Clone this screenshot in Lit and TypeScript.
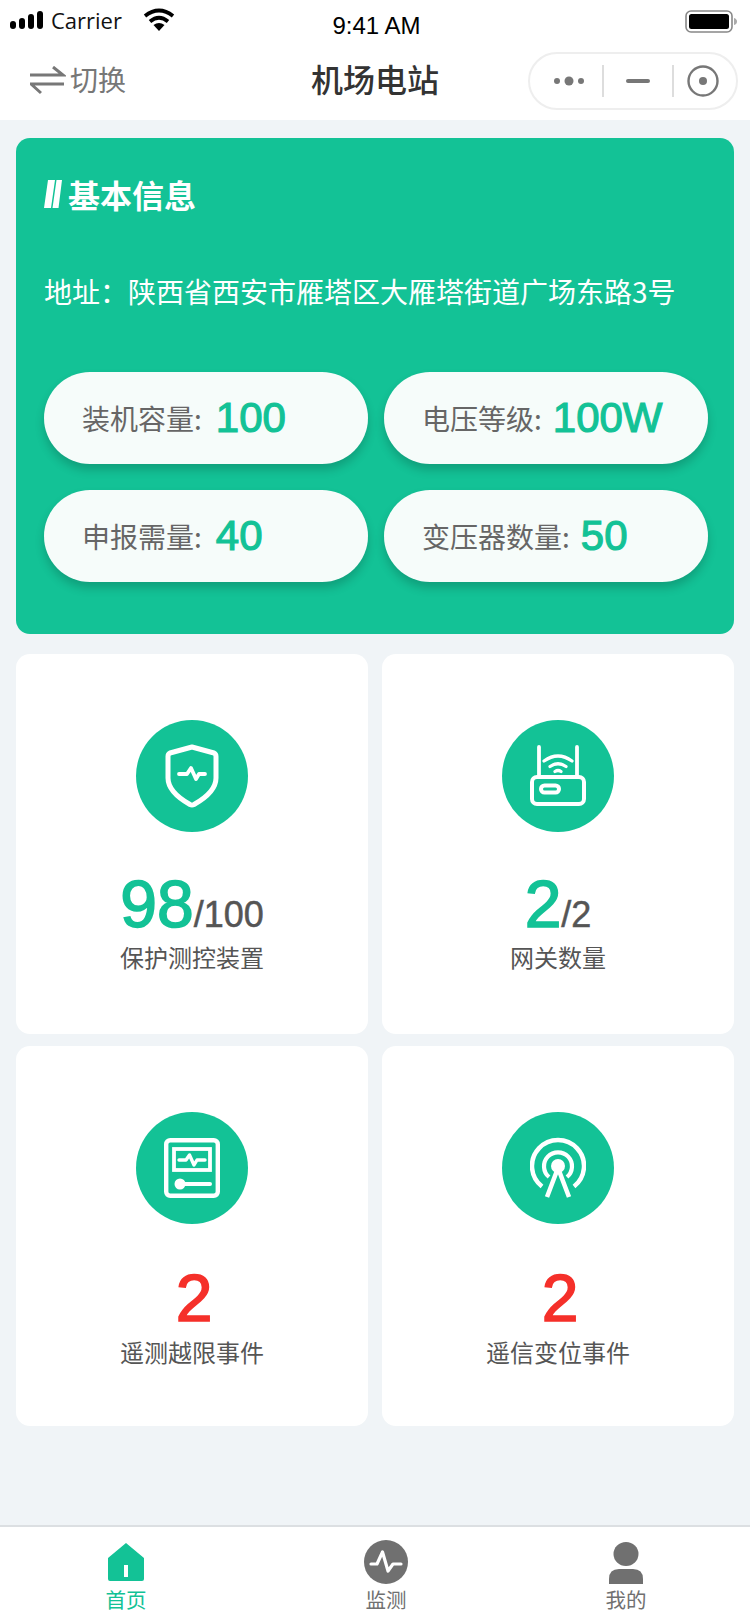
import { LitElement, html, css, svg } from "lit";
import { customElement } from "lit/decorators.js";

const pills = [
  { label: "装机容量:", value: "100" },
  { label: "电压等级:", value: "100W" },
  { label: "申报需量:", value: "40" },
  { label: "变压器数量:", value: "50" },
];

const shieldIcon = svg`
  <path d="M28 3 L50 9 Q52 10 52 12.500 V34 C52 47 38 56 30 60.500 Q28 61.500 26 60.500 C18 56 4 47 4 34 V12.500 Q4 10 6 9 Z" fill="none" stroke="#fff" stroke-width="5" stroke-linejoin="round"/>
  <path d="M15 30 H23 L27 24 L32 35 L35 30 H41" fill="none" stroke="#fff" stroke-width="3.800" stroke-linecap="round" stroke-linejoin="round"/>`;

const routerIcon = svg`
  <path d="M9 3 V33 M47 3 V33" stroke="#fff" stroke-width="3.800" stroke-linecap="round"/>
  <rect x="2" y="33" width="52" height="27" rx="5" fill="none" stroke="#fff" stroke-width="4"/>
  <rect x="11" y="41.500" width="18" height="7" rx="3.500" fill="none" stroke="#fff" stroke-width="4"/>
  <path d="M14 17 Q28 7 42 17 M20 22.500 Q28 17 36 22.500 M25 27.500 Q28 25.500 31 27.500" fill="none" stroke="#fff" stroke-width="3.200" stroke-linecap="round"/>`;

const reportIcon = svg`
  <rect x="2.200" y="4.200" width="51.600" height="55.600" rx="4" fill="none" stroke="#fff" stroke-width="4.400"/>
  <rect x="10" y="13" width="36" height="21" fill="none" stroke="#fff" stroke-width="3.800"/>
  <path d="M15 24 H22 L25.500 19 L30 29 L33 24 H41" fill="none" stroke="#fff" stroke-width="3.400" stroke-linecap="round" stroke-linejoin="round"/>
  <circle cx="16" cy="48" r="5.500" fill="#fff"/>
  <path d="M18 48 H46" stroke="#fff" stroke-width="4" stroke-linecap="round"/>`;

const towerIcon = svg`
  <path d="M12 50.500 A26 26 0 1 1 44 50.500" fill="none" stroke="#fff" stroke-width="4.500"/>
  <path d="M19 41 A14 14 0 1 1 37 41" fill="none" stroke="#fff" stroke-width="4.200"/>
  <circle cx="28" cy="30" r="7" fill="#fff"/>
  <path d="M28 32 L17 61 M28 32 L39 61" stroke="#fff" stroke-width="4.500"/>`;

const cards = [
  { icon: shieldIcon, big: "98", small: "/100", label: "保护测控装置", alert: false },
  { icon: routerIcon, big: "2", small: "/2", label: "网关数量", alert: false },
  { icon: reportIcon, big: "2", small: "", label: "遥测越限事件", alert: true },
  { icon: towerIcon, big: "2", small: "", label: "遥信变位事件", alert: true },
];

@customElement("app-root")
export class AppRoot extends LitElement {
  render() {
    return html`
      <div class="page">
        <div class="status">
          <div class="status-left">
            <svg class="signal" width="34" height="20" viewBox="0 0 34 20">
              <rect x="0" y="11" width="6" height="8" rx="3" fill="#000"/>
              <rect x="9" y="8" width="6" height="11" rx="3" fill="#000"/>
              <rect x="18" y="4" width="6" height="15" rx="3" fill="#000"/>
              <rect x="27" y="1" width="6" height="18" rx="3" fill="#000"/>
            </svg>
            <span class="carrier">Carrier</span>
            <svg width="32" height="24" viewBox="0 0 32 24">
              <path d="M2 8 Q16 -3 30 8 M7 13.500 Q16 6 25 13.500" fill="none" stroke="#000" stroke-width="3.800"/>
              <path d="M10.500 17 Q16 13 21.500 17 L16 23 Z" fill="#000"/>
            </svg>
          </div>
          <div class="time">9:41 AM</div>
          <div class="status-right">
            <svg width="52" height="24" viewBox="0 0 52 24">
              <rect x="1" y="1" width="46" height="21" rx="5" fill="none" stroke="#888" stroke-width="1.600"/>
              <rect x="4" y="4" width="40" height="15" rx="2.500" fill="#000"/>
              <path d="M49 8 Q52 9 52 11.500 Q52 14 49 15 Z" fill="#aaa"/>
            </svg>
          </div>
        </div>
        <div class="nav">
          <div class="switch">
            <svg width="36" height="30" viewBox="0 0 36 30">
              <path d="M0 9 H33 L23 1 M34 18 H1 L11 27" fill="none" stroke="#777" stroke-width="3"/>
            </svg>
            <span>切换</span>
          </div>
          <div class="title">机场电站</div>
          <div class="capsule">
            <svg class="cap-dots" width="30" height="12" viewBox="0 0 30 12">
              <circle cx="3" cy="6" r="3" fill="#777"/><circle cx="15" cy="6" r="4.500" fill="#777"/><circle cx="27" cy="6" r="3" fill="#777"/>
            </svg>
            <div class="cap-line"></div>
            <div class="cap-dash"></div>
            <div class="cap-line"></div>
            <svg class="cap-target" width="32" height="32" viewBox="0 0 32 32">
              <circle cx="16" cy="16" r="14.500" fill="none" stroke="#777" stroke-width="2.400"/><circle cx="16" cy="16" r="4" fill="#777"/>
            </svg>
          </div>
        </div>

        <main class="content">
          <section class="info">
            <div class="info-head">
              <svg width="18" height="28" viewBox="0 0 18 28">
                <path d="M4 0 H11 L7 28 H0 Z M12.500 0 H18 L14.500 28 H8.500 Z" fill="#fff"/>
              </svg>
              <h2>基本信息</h2>
            </div>
            <div class="address">地址：陕西省西安市雁塔区大雁塔街道广场东路3号</div>
            <div class="pills">
              ${pills.map(
                (p) => html`<div class="pill"><span class="pill-label">${p.label}</span><span class="pill-value">${p.value}</span></div>`
              )}
            </div>
          </section>

          <section class="grid">
            ${cards.map(
              (c) => html`
                <div class="card">
                  <div class="badge">
                    <svg width="56" height="64" viewBox="0 0 56 64">${c.icon}</svg>
                  </div>
                  <div class="count ${c.alert ? "plain" : ""}">
                    <span class="big ${c.alert ? "alert" : ""}">${c.big}</span><span class="small">${c.small}</span>
                  </div>
                  <div class="label">${c.label}</div>
                </div>
              `
            )}
          </section>
        </main>

        <footer class="tabs">
          <div class="tab active">
            <svg width="38" height="38" viewBox="0 0 38 38">
              <path d="M19 0 L37 15 V36 Q37 38 35 38 H3 Q1 38 1 36 V15 Z M17 22 V34 H21 V22 Z" fill="#13c296" fill-rule="evenodd"/>
            </svg>
            <span>首页</span>
          </div>
          <div class="tab">
            <svg width="44" height="44" viewBox="0 0 44 44">
              <circle cx="22" cy="22" r="22" fill="#707070"/>
              <path d="M7 24 H13 L18.500 12 L24 31 L29 24 H37" fill="none" stroke="#fff" stroke-width="3.200" stroke-linecap="round" stroke-linejoin="round"/>
            </svg>
            <span>监测</span>
          </div>
          <div class="tab">
            <svg width="36" height="44" viewBox="0 0 36 44">
              <ellipse cx="18" cy="14" rx="12.500" ry="12" fill="#707070"/>
              <path d="M1 44 V39 Q1 29 11 29 H25 Q35 29 35 39 V44 Z" fill="#707070"/>
            </svg>
            <span>我的</span>
          </div>
        </footer>
      </div>
    `;
  }

  static styles = css`
    :host {
      display: block;
      font-family: "Noto Sans CJK SC", "Noto Sans", sans-serif;
    }

    .page {
      width: 750px;
      height: 1624px;
      display: flex;
      flex-direction: column;
      background: #f0f4f7;
    }

    .status {
      height: 44px;
      flex: none;
      background: #fff;
      display: grid;
      grid-template-columns: 1fr auto 1fr;
      align-items: center;
      padding: 0 13px 0 10px;
    }

    .status-left {
      display: flex;
      align-items: center;
      gap: 7px;
      margin-top: -4px;
    }

    .carrier {
      font: 22px "Open Sans", sans-serif;
      color: #111;
      margin-right: 14px;
    }

    .time {
      font: 24px "Liberation Sans", sans-serif;
      color: #000;
      margin: 8px 0 0 6px;
    }

    .status-right {
      display: flex;
      justify-content: flex-end;
    }

    .nav {
      height: 76px;
      flex: none;
      background: #fff;
      display: flex;
      align-items: center;
      justify-content: space-between;
      padding: 0 12px 2px 30px;
      box-sizing: border-box;
      position: relative;
    }

    .switch {
      display: flex;
      align-items: center;
      gap: 4px;
      color: #777;
      font-size: 28px;
      line-height: 40px;
    }

    .switch span {
      margin-top: -4px;
    }

    .title {
      position: absolute;
      left: 0;
      right: 0;
      margin-top: -6px;
      text-align: center;
      font-size: 32px;
      font-weight: 500;
      color: #333;
      pointer-events: none;
    }

    .capsule {
      width: 210px;
      height: 58px;
      box-sizing: border-box;
      border: 2px solid #eee;
      border-radius: 29px;
      display: flex;
      align-items: center;
      padding-left: 24px;
    }

    .cap-dots {
      margin-right: 18px;
    }

    .cap-line {
      width: 2px;
      height: 32px;
      background: #ddd;
    }

    .cap-dash {
      width: 24px;
      height: 4px;
      border-radius: 2px;
      background: #777;
      margin: 0 22px;
    }

    .cap-target {
      margin-left: 13px;
    }

    .content {
      flex: 1;
      padding: 18px 16px 0;
      display: flex;
      flex-direction: column;
      gap: 20px;
    }

    .info {
      height: 496px;
      box-sizing: border-box;
      background: #13c296;
      border-radius: 14px;
      padding: 36px 26px 0 28px;
      color: #fff;
    }

    .info-head {
      display: flex;
      align-items: center;
      gap: 6px;
      height: 40px;
    }

    h2 {
      margin: 0;
      font-size: 32px;
      font-weight: 700;
      line-height: 40px;
    }

    .address {
      margin-top: 57px;
      font-size: 28px;
      line-height: 40px;
    }

    .pills {
      margin-top: 61px;
      display: grid;
      grid-template-columns: 324px 324px;
      gap: 26px 16px;
    }

    .pill {
      height: 92px;
      border-radius: 46px;
      background: #f6fcfa;
      box-shadow: 0 6px 10px rgba(0, 0, 0, 0.18);
      display: flex;
      align-items: center;
      padding-left: 38px;
      gap: 14px;
      color: #666;
      font-size: 28px;
    }

    .pill:nth-child(even) {
      gap: 11px;
    }

    .pill-value {
      font: 42px "Liberation Sans", sans-serif;
      -webkit-text-stroke: 1.2px #13c296;
      color: #13c296;
    }

    .grid {
      display: grid;
      grid-template-columns: 352px 352px;
      grid-auto-rows: 380px;
      gap: 12px 14px;
    }

    .card {
      background: #fff;
      border-radius: 14px;
      display: flex;
      flex-direction: column;
      align-items: center;
      padding-top: 66px;
      box-sizing: border-box;
    }

    .badge {
      width: 112px;
      height: 112px;
      border-radius: 50%;
      background: #13c296;
      display: flex;
      align-items: center;
      justify-content: center;
    }

    .count {
      margin-top: 36px;
      height: 71px;
      display: flex;
      align-items: baseline;
      justify-content: center;
      font-family: "Liberation Sans", sans-serif;
      line-height: 72px;
    }

    .count.plain {
      margin-top: 38px;
      height: 72px;
      padding-left: 4px;
    }

    .big {
      font-size: 66px;
      -webkit-text-stroke: 1.600px currentColor;
      color: #13c296;
    }

    .big.alert {
      color: #f5302a;
    }

    .small {
      font-size: 36px;
      -webkit-text-stroke: 0.5px currentColor;
      color: #555;
    }

    .label {
      font-size: 24px;
      line-height: 36px;
      color: #555;
    }

    .tabs {
      height: 99px;
      flex: none;
      background: #fff;
      border-top: 2px solid #dcdfe2;
      display: grid;
      grid-template-columns: 252px 268px 212px;
      padding-top: 13px;
      box-sizing: border-box;
    }

    .tab {
      display: flex;
      flex-direction: column;
      align-items: center;
      font-size: 20.500px;
      line-height: 30px;
      color: #707070;
    }

    .tab svg {
      height: 44px;
    }

    .tab.active {
      color: #13c296;
    }
  `;
}
